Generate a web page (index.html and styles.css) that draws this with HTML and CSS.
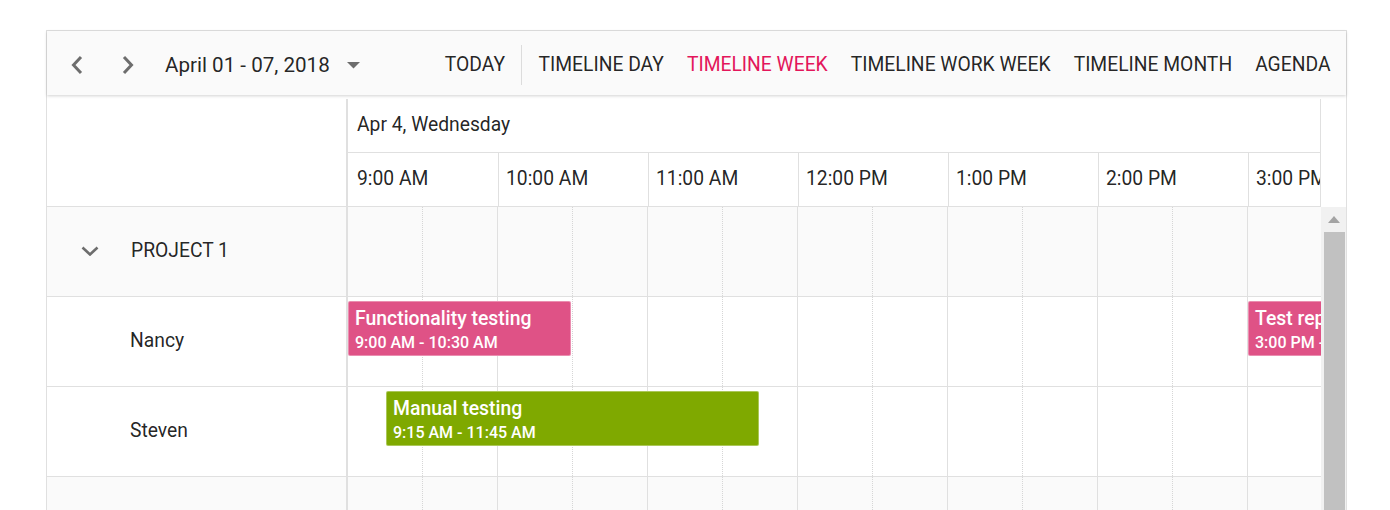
FILE: index.html
```html
<!DOCTYPE html>
<html lang="en">
<head>
<meta charset="utf-8">
<title>Timeline Scheduler</title>
<link rel="stylesheet" href="styles.css">
</head>
<body>
<div class="page">
  <div class="scheduler">
    <div class="toolbar">
      <div class="nav">
        <button class="icon-btn prev" aria-label="Previous">
          <svg width="14" height="20" viewBox="0 0 14 20"><path d="M11 2 L3.5 10 L11 18" fill="none" stroke="#6d6d6d" stroke-width="3"/></svg>
        </button>
        <button class="icon-btn next" aria-label="Next">
          <svg width="14" height="20" viewBox="0 0 14 20"><path d="M3 2 L10.5 10 L3 18" fill="none" stroke="#6d6d6d" stroke-width="3"/></svg>
        </button>
        <div class="date-range">
          <span>April 01 - 07, 2018</span>
          <svg class="caret" width="13" height="7" viewBox="0 0 13 7"><path d="M0 0 H13 L6.5 6.5 Z" fill="#6d6d6d"/></svg>
        </div>
      </div>
      <div class="views">
        <span class="view today">TODAY</span>
        <span class="sep"></span>
        <span class="view">TIMELINE DAY</span>
        <span class="view active">TIMELINE WEEK</span>
        <span class="view">TIMELINE WORK WEEK</span>
        <span class="view">TIMELINE MONTH</span>
        <span class="view">AGENDA</span>
      </div>
    </div>

    <div class="table">
      <div class="header">
        <div class="res-header"></div>
        <div class="date-time">
          <div class="date-row">Apr 4, Wednesday</div>
          <div class="time-row">
            <div class="time-cell">9:00 AM</div>
            <div class="time-cell">10:00 AM</div>
            <div class="time-cell">11:00 AM</div>
            <div class="time-cell">12:00 PM</div>
            <div class="time-cell">1:00 PM</div>
            <div class="time-cell">2:00 PM</div>
            <div class="time-cell">3:00 PM</div>
          </div>
        </div>
        <div class="gutter"></div>
      </div>

      <div class="content">
        <div class="res-col">
          <div class="res-row group">
            <svg class="chevron" width="18" height="10" viewBox="0 0 18 10"><path d="M1.5 1.5 L9 8.5 L16.5 1.5" fill="none" stroke="#6d6d6d" stroke-width="2.6"/></svg>
            <span>PROJECT 1</span>
          </div>
          <div class="res-row child"><span>Nancy</span></div>
          <div class="res-row child"><span>Steven</span></div>
          <div class="res-row group"></div>
        </div>

        <div class="work">
          <div class="work-row group">
            <div class="slot"></div><div class="slot half"></div><div class="slot"></div><div class="slot half"></div><div class="slot"></div><div class="slot half"></div><div class="slot"></div><div class="slot half"></div><div class="slot"></div><div class="slot half"></div><div class="slot"></div><div class="slot half"></div><div class="slot"></div><div class="slot half"></div>
          </div>
          <div class="work-row">
            <div class="slot"></div><div class="slot half"></div><div class="slot"></div><div class="slot half"></div><div class="slot"></div><div class="slot half"></div><div class="slot"></div><div class="slot half"></div><div class="slot"></div><div class="slot half"></div><div class="slot"></div><div class="slot half"></div><div class="slot"></div><div class="slot half"></div>
          </div>
          <div class="work-row">
            <div class="slot"></div><div class="slot half"></div><div class="slot"></div><div class="slot half"></div><div class="slot"></div><div class="slot half"></div><div class="slot"></div><div class="slot half"></div><div class="slot"></div><div class="slot half"></div><div class="slot"></div><div class="slot half"></div><div class="slot"></div><div class="slot half"></div>
          </div>
          <div class="work-row group">
            <div class="slot"></div><div class="slot half"></div><div class="slot"></div><div class="slot half"></div><div class="slot"></div><div class="slot half"></div><div class="slot"></div><div class="slot half"></div><div class="slot"></div><div class="slot half"></div><div class="slot"></div><div class="slot half"></div><div class="slot"></div><div class="slot half"></div>
          </div>

          <div class="event pink ev-func">
            <div class="ev-title">Functionality testing</div>
            <div class="ev-time">9:00 AM - 10:30 AM</div>
          </div>
          <div class="event green ev-manual">
            <div class="ev-title">Manual testing</div>
            <div class="ev-time">9:15 AM - 11:45 AM</div>
          </div>
          <div class="event pink ev-report">
            <div class="ev-title">Test report validation</div>
            <div class="ev-time">3:00 PM - 4:30 PM</div>
          </div>
        </div>

        <div class="scrollbar">
          <div class="sb-arrow"><svg width="12" height="7" viewBox="0 0 12 7"><path d="M0 7 L6 0 L12 7 Z" fill="#a3a3a3"/></svg></div>
          <div class="sb-thumb"></div>
        </div>
      </div>
    </div>
  </div>
</div>
</body>
</html>
```

FILE: styles.css
```css
html, body {
  margin: 0;
  padding: 0;
  height: 510px;
  overflow: hidden;
  background: #ffffff;
}

body {
  font-family: Roboto, "Liberation Sans", Arial, sans-serif;
  color: rgba(0, 0, 0, 0.87);
}

.page {
  padding: 30px 0 0 46px;
}

.scheduler {
  width: 1301px;
  box-sizing: border-box;
  border: 1px solid #e0e0e0;
  border-bottom: none;
  background: #fff;
}

/* Toolbar */
.toolbar {
  height: 64px;
  box-sizing: border-box;
  padding-top: 3px;
  background: #fafafa;
  display: flex;
  align-items: center;
  justify-content: space-between;
  box-shadow: 0 1px 3px rgba(0, 0, 0, 0.18);
  position: relative;
  z-index: 2;
}

.nav {
  display: flex;
  align-items: center;
  padding-left: 10px;
}

.icon-btn {
  width: 40px;
  height: 40px;
  border: none;
  background: transparent;
  padding: 0;
  display: flex;
  align-items: center;
  justify-content: center;
}

.icon-btn.next {
  margin-left: 11px;
}

.date-range {
  display: flex;
  align-items: center;
  margin-left: 17px;
  font-size: 20.6px;
  color: rgba(0, 0, 0, 0.87);
}

.caret {
  margin-left: 17px;
  margin-top: 1px;
}

.views {
  display: flex;
  align-items: center;
  padding-right: 4px;
  font-size: 19.3px;
}

.view {
  padding: 0 11.5px;
  color: rgba(0, 0, 0, 0.87);
  line-height: 40px;
}

.view.today {
  padding: 0 16px 0 11px;
}

.view.active {
  color: #e3165b;
}

.sep {
  width: 1px;
  height: 40px;
  background: #dcdcdc;
  margin-right: 5px;
}

/* Table */
.table {
  padding-top: 4px;
}

.header {
  display: flex;
  height: 108px;
}

.res-header {
  width: 300px;
  box-sizing: border-box;
  border-right: 1px solid #e0e0e0;
  border-bottom: 1px solid #e0e0e0;
}

.date-time {
  width: 974px;
  box-sizing: border-box;
  border-left: 1px solid #e0e0e0;
  border-right: 1px solid #e0e0e0;
  overflow: hidden;
}

.date-row {
  height: 54px;
  box-sizing: border-box;
  border-bottom: 1px solid #e0e0e0;
  padding: 0 0 2px 9px;
  display: flex;
  align-items: center;
  font-size: 19.3px;
  color: rgba(0, 0, 0, 0.87);
}

.time-row {
  display: flex;
  height: 54px;
  box-sizing: border-box;
  border-bottom: 1px solid #e0e0e0;
}

.time-cell {
  flex: 0 0 150px;
  box-sizing: border-box;
  border-left: 1px solid #e0e0e0;
  padding: 0 0 2px 7px;
  display: flex;
  align-items: center;
  font-size: 19.3px;
  white-space: nowrap;
  overflow: hidden;
}

.time-cell:first-child {
  border-left: none;
  padding-left: 9px;
}

.gutter {
  width: 25px;
}

/* Content */
.content {
  display: flex;
  height: 303px;
  overflow: hidden;
}

.res-col {
  width: 300px;
  box-sizing: border-box;
  border-right: 1px solid #e0e0e0;
  flex: none;
}

.res-row {
  height: 90px;
  box-sizing: border-box;
  border-bottom: 1px solid #e0e0e0;
  padding-bottom: 2px;
  display: flex;
  align-items: center;
  font-size: 19.3px;
  color: rgba(0, 0, 0, 0.87);
}

.res-row.group {
  background: #fafafa;
  padding-left: 34px;
}

.res-row.group span {
  margin-left: 32px;
}

.res-row.child {
  padding-left: 83px;
}

.work {
  position: relative;
  width: 974px;
  flex: none;
  overflow: hidden;
}

.work-row {
  display: flex;
  height: 90px;
  box-sizing: border-box;
  border-bottom: 1px solid #e0e0e0;
}

.work-row.group {
  background: #fafafa;
}

.slot {
  flex: 0 0 75px;
  box-sizing: border-box;
  border-left: 1px solid #e0e0e0;
}

.slot.half {
  border-left: 1px dotted #d6d6d6;
}

.event {
  position: absolute;
  height: 55px;
  box-sizing: border-box;
  border-radius: 2px;
  color: #fff;
  padding: 4px 0 0 6px;
  white-space: nowrap;
  overflow: hidden;
  border: 1px solid rgba(255, 255, 255, 0.35);
}

.event.pink {
  background: #df5286;
}

.event.green {
  background: #7fa900;
}

.ev-title {
  font-size: 19.4px;
  font-weight: 500;
  line-height: 26px;
}

.ev-time {
  font-size: 16px;
  font-weight: 500;
  line-height: 20px;
  margin-top: 1px;
}

.ev-func {
  left: 1px;
  top: 94px;
  width: 223px;
}

.ev-manual {
  left: 39px;
  top: 184px;
  width: 373px;
}

.ev-report {
  left: 901px;
  top: 94px;
  width: 220px;
}

/* Scrollbar */
.scrollbar {
  width: 25px;
  flex: none;
  background: #f1f1f1;
  display: flex;
  flex-direction: column;
  align-items: center;
}

.sb-arrow {
  height: 25px;
  display: flex;
  align-items: center;
  justify-content: center;
  padding-left: 1px;
}

.sb-thumb {
  width: 21px;
  flex: 1;
  background: #c1c1c1;
  margin-left: 1px;
}
```
